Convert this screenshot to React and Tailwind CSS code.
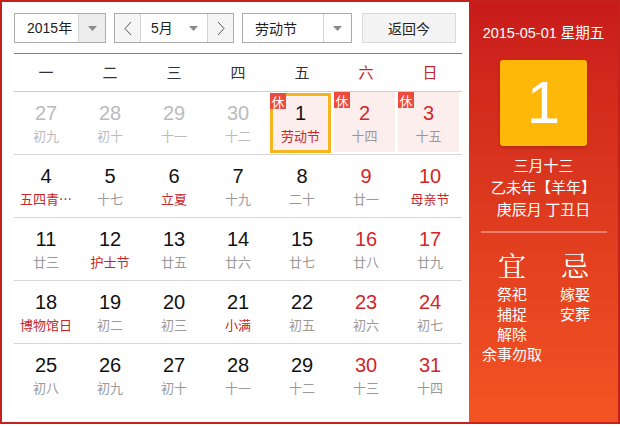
import React from 'react';

const weekDays = ['一', '二', '三', '四', '五', '六', '日'];

// n: number, l: lunar text, t: type (prev, fest), hol: holiday cell
const weeks = [
  [
    { n: 27, l: '初九', t: 'prev' },
    { n: 28, l: '初十', t: 'prev' },
    { n: 29, l: '十一', t: 'prev' },
    { n: 30, l: '十二', t: 'prev' },
    { n: 1, l: '劳动节', fest: true, hol: true, sel: true },
    { n: 2, l: '十四', hol: true },
    { n: 3, l: '十五', hol: true },
  ],
  [
    { n: 4, l: '五四青…', fest: true },
    { n: 5, l: '十七' },
    { n: 6, l: '立夏', fest: true },
    { n: 7, l: '十九' },
    { n: 8, l: '二十' },
    { n: 9, l: '廿一' },
    { n: 10, l: '母亲节', fest: true },
  ],
  [
    { n: 11, l: '廿三' },
    { n: 12, l: '护士节', fest: true },
    { n: 13, l: '廿五' },
    { n: 14, l: '廿六' },
    { n: 15, l: '廿七' },
    { n: 16, l: '廿八' },
    { n: 17, l: '廿九' },
  ],
  [
    { n: 18, l: '博物馆日', fest: true },
    { n: 19, l: '初二' },
    { n: 20, l: '初三' },
    { n: 21, l: '小满', fest: true },
    { n: 22, l: '初五' },
    { n: 23, l: '初六' },
    { n: 24, l: '初七' },
  ],
  [
    { n: 25, l: '初八' },
    { n: 26, l: '初九' },
    { n: 27, l: '初十' },
    { n: 28, l: '十一' },
    { n: 29, l: '十二' },
    { n: 30, l: '十三' },
    { n: 31, l: '十四' },
  ],
];

const Caret = () => (
  <svg width="9" height="5" viewBox="0 0 9 5">
    <path d="M0 0h9L4.5 5z" fill="#8a8a8a" />
  </svg>
);

const Chevron = ({ dir }) => (
  <svg width="8" height="15" viewBox="0 0 8 15">
    <path
      d={dir === 'left' ? 'M7 1L1 7.5l6 6.5' : 'M1 1l6 6.5-6 6.5'}
      fill="none"
      stroke="#555"
      strokeWidth="1"
    />
  </svg>
);

const DayCell = ({ day, col }) => {
  const weekend = col >= 5;
  const numColor =
    day.t === 'prev' ? 'text-[#bbbbbb]' : weekend ? 'text-[#d2262a]' : 'text-[#111]';
  const lunarColor =
    day.t === 'prev' ? 'text-[#bbbbbb]' : day.fest ? 'text-[#c8272c]' : 'text-[#999]';

  const inner = (
    <div className="flex flex-col items-center pt-[8px]">
      <div className={`text-[20px] leading-[26px] font-['Liberation_Sans',sans-serif] ${numColor}`}>
        {day.n}
      </div>
      <div className={`mt-[1px] text-[13px] leading-[18px] whitespace-nowrap ${lunarColor}`}>{day.l}</div>
    </div>
  );

  if (!day.hol) return <div className="h-full">{inner}</div>;

  return (
    <div className="h-full pb-[1px] pr-[3px] pt-[1px]">
      <div
        className={`relative h-full bg-[#fdeeee] ${day.sel ? 'border-[3px] border-[#f5b51f]' : ''}`}
      >
        <div className={day.sel ? '-mt-[4px]' : '-mt-[1px]'}>{inner}</div>
        <span
          className={`absolute flex h-[16px] w-[16px] items-center justify-center bg-[#ec4a3c] text-[13px] leading-none text-white ${
            day.sel ? '-left-[3px] -top-[3px]' : 'left-0 top-0'
          }`}
        >
          休
        </span>
      </div>
    </div>
  );
};

export default function App() {
  return (
    <div className="h-[424px] w-[620px] border-2 border-[#c5221e] bg-white font-['Noto_Sans_CJK_SC','Liberation_Sans',sans-serif]">
      <div className="flex h-full">
        {/* calendar side */}
        <div className="w-[467px] pl-[12px] pt-[11px]">
          <div className="flex h-[30px] w-[442px] items-stretch text-[14px] text-[#222]">
            <div className="flex w-[92px] border border-[#ababab] bg-white">
              <div className="flex flex-1 items-center pl-[12px] font-['Liberation_Sans','Noto_Sans_CJK_SC',sans-serif]">
                2015年
              </div>
              <div className="flex w-[27px] items-center justify-center border-l border-[#d4d4d4] bg-[#ededed]">
                <Caret />
              </div>
            </div>

            <div className="ml-[8px] flex w-[120px] border border-[#ababab]">
              <div className="flex w-[25px] items-center justify-center bg-[#f5f5f5]">
                <Chevron dir="left" />
              </div>
              <div className="flex flex-1 items-center border-x border-[#d4d4d4] bg-white pl-[10px] pr-[9px]">
                <span className="flex-1 font-['Liberation_Sans','Noto_Sans_CJK_SC',sans-serif]">5月</span>
                <Caret />
              </div>
              <div className="flex w-[25px] items-center justify-center bg-[#f5f5f5]">
                <Chevron dir="right" />
              </div>
            </div>

            <div className="ml-[8px] flex w-[110px] border border-[#ababab] bg-white">
              <div className="flex flex-1 items-center pl-[12px]">劳动节</div>
              <div className="flex w-[28px] items-center justify-center border-l border-[#d4d4d4]">
                <Caret />
              </div>
            </div>

            <div className="ml-[10px] flex w-[94px] items-center justify-center border border-[#d9d9d9] bg-[#f4f4f4]">
              返回今
            </div>
          </div>

          <div className="mt-[10px] h-px w-[448px] bg-[#d35a52]" />

          <div className="grid h-[38px] w-[448px] grid-cols-7 border-b border-[#cfcfcf] text-[15px]">
            {weekDays.map((w, i) => (
              <div
                key={w}
                className={`flex items-center justify-center ${i >= 5 ? 'text-[#c0262c]' : 'text-[#333]'}`}
              >
                {w}
              </div>
            ))}
          </div>

          {weeks.map((week, r) => (
            <div
              key={r}
              className={`grid h-[63px] w-[448px] grid-cols-7 ${
                r < weeks.length - 1 ? 'border-b border-[#d6d6d6]' : ''
              }`}
            >
              {week.map((day, c) => (
                <DayCell key={c} day={day} col={c} />
              ))}
            </div>
          ))}
        </div>

        {/* detail side */}
        <div className="flex flex-1 flex-col items-center bg-linear-to-b from-[#c81b1b] to-[#f45323] text-white">
          <div className="mt-[20px] text-[14.5px] leading-[20px]">
            <span className="font-['Liberation_Sans',sans-serif]">2015-05-01 </span>星期五
          </div>
          <div className="mt-[17px] flex h-[86px] w-[87px] items-center justify-center rounded-[3px] bg-[#fdb80a] shadow-[0_2px_3px_rgba(120,20,0,0.35)]">
            <span className="font-['Liberation_Sans',sans-serif] text-[60px] leading-none">1</span>
          </div>
          <div className="mt-[8px] flex flex-col items-center text-[15px] leading-[22px]">
            <div>三月十三</div>
            <div>乙未年【羊年】</div>
            <div>庚辰月 丁丑日</div>
          </div>
          <div className="mt-[11px] h-[2px] w-[126px] bg-[#f0806c]" />
          <div className="mt-[14px] flex w-[126px]">
            <div className="flex w-[63px] flex-col items-center">
              <div className="font-['Noto_Serif_CJK_SC','Noto_Sans_CJK_SC',serif] text-[28px] leading-[36px]">宜</div>
              <div className="mt-[1px] flex flex-col items-center text-[15px] leading-[20px]">
                <div>祭祀</div>
                <div>捕捉</div>
                <div>解除</div>
                <div className="whitespace-nowrap">余事勿取</div>
              </div>
            </div>
            <div className="flex w-[63px] flex-col items-center">
              <div className="font-['Noto_Serif_CJK_SC','Noto_Sans_CJK_SC',serif] text-[28px] leading-[36px]">忌</div>
              <div className="mt-[1px] flex flex-col items-center text-[15px] leading-[20px]">
                <div>嫁娶</div>
                <div>安葬</div>
              </div>
            </div>
          </div>
        </div>
      </div>
    </div>
  );
}
